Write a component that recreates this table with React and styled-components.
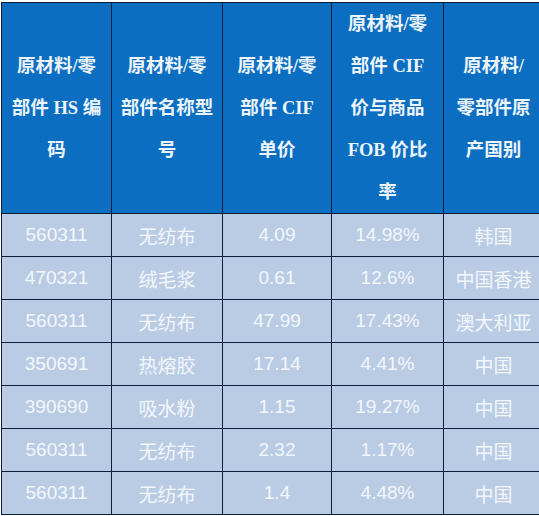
import React from "react";
import styled, { createGlobalStyle } from "styled-components";

const GlobalStyle = createGlobalStyle`
  body {
    margin: 0;
    background: #ffffff;
  }
`;

const Wrapper = styled.div`
  padding: 2px 0 0 1px;
`;

const Table = styled.table`
  border-collapse: collapse;
  table-layout: fixed;
  width: 537px;
  border: 1.5px solid #0e1d3a;
`;

const HeadCell = styled.th`
  width: ${(p) => p.w}px;
  height: 210px;
  padding: 0;
  background: #0b6ec1;
  border: 1px solid #0e1d3a;
  color: #eef4fb;
  font-family: "Liberation Serif", "Noto Sans CJK SC", serif;
  font-weight: bold;
  font-size: 18.5px;
  line-height: 42px;
  text-align: center;
  vertical-align: middle;
`;

const Row = styled.tr`
  height: 43px;
`;

const Cell = styled.td`
  padding: 0;
  background: #b9cce4;
  border: 1px solid #0e1d3a;
  color: #f3f7fc;
  font-family: "Liberation Sans", "Noto Sans CJK SC", sans-serif;
  font-size: 19px;
  text-align: center;
  vertical-align: middle;
`;

const headers = [
  { w: 109, lines: ["原材料/零", "部件 HS 编", "码"] },
  { w: 110, lines: ["原材料/零", "部件名称型", "号"] },
  { w: 108, lines: ["原材料/零", "部件 CIF", "单价"] },
  { w: 111, lines: ["原材料/零", "部件 CIF", "价与商品", "FOB 价比", "率"] },
  { w: 99, lines: ["原材料/", "零部件原", "产国别"] },
];

const rows = [
  ["560311", "无纺布", "4.09", "14.98%", "韩国"],
  ["470321", "绒毛浆", "0.61", "12.6%", "中国香港"],
  ["560311", "无纺布", "47.99", "17.43%", "澳大利亚"],
  ["350691", "热熔胶", "17.14", "4.41%", "中国"],
  ["390690", "吸水粉", "1.15", "19.27%", "中国"],
  ["560311", "无纺布", "2.32", "1.17%", "中国"],
  ["560311", "无纺布", "1.4", "4.48%", "中国"],
];

function App() {
  return (
    <Wrapper>
      <GlobalStyle />
      <Table>
        <thead>
          <tr>
            {headers.map((h, i) => (
              <HeadCell key={i} w={h.w}>
                {h.lines.map((l, j) => (
                  <React.Fragment key={j}>
                    {l}
                    {j < h.lines.length - 1 && <br />}
                  </React.Fragment>
                ))}
              </HeadCell>
            ))}
          </tr>
        </thead>
        <tbody>
          {rows.map((r, i) => (
            <Row key={i}>
              {r.map((c, j) => (
                <Cell key={j}>{c}</Cell>
              ))}
            </Row>
          ))}
        </tbody>
      </Table>
    </Wrapper>
  );
}

export default App;
